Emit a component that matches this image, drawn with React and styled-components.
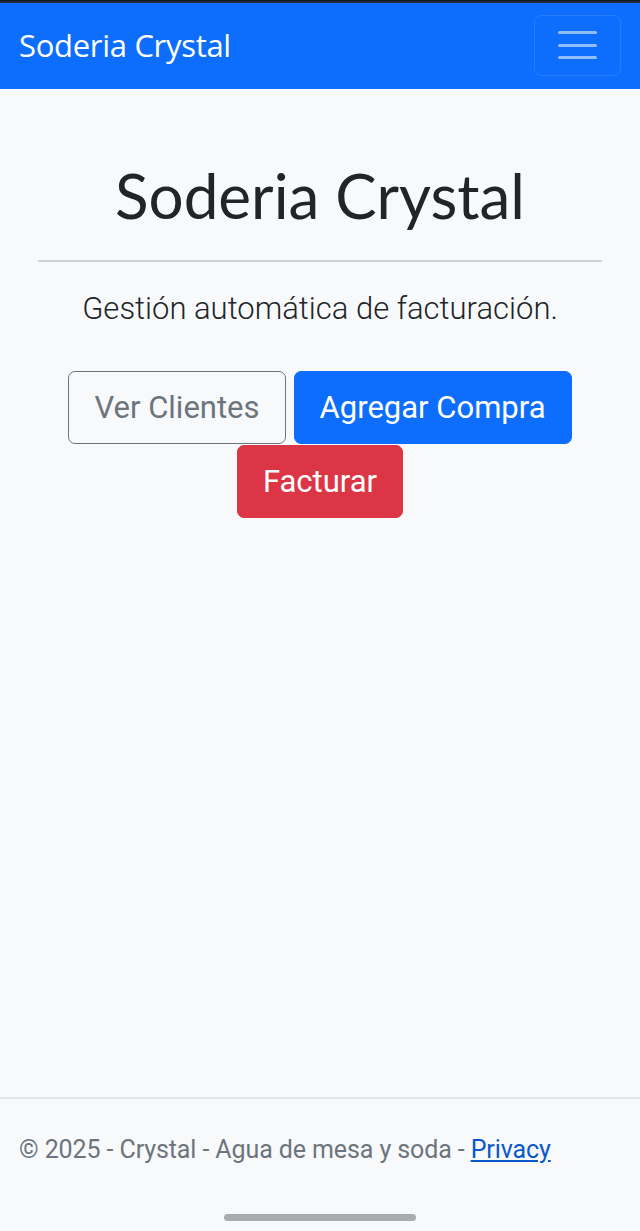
import React from 'react';
import styled, { createGlobalStyle } from 'styled-components';

const GlobalStyle = createGlobalStyle`
  * { box-sizing: border-box; }
  html, body { margin: 0; padding: 0; }
  body {
    background-color: #f8f9fa;
    font-family: Roboto, "Liberation Sans", sans-serif;
    color: #212529;
  }
`;

const Page = styled.div`
  min-height: 100vh;
  display: flex;
  flex-direction: column;
`;

const StatusStrip = styled.div`
  height: 3px;
  background: linear-gradient(#111318, #2a3550);
`;

const Navbar = styled.nav`
  height: 86px;
  background-color: #0d6efd;
  display: flex;
  align-items: center;
  justify-content: space-between;
  padding: 0 19px 0 19px;
`;

const Brand = styled.a`
  color: #fff;
  font-family: "Open Sans", "DejaVu Sans", sans-serif;
  font-size: 31px;
  margin-top: -3px;
  text-decoration: none;
  letter-spacing: -0.3px;
`;

const Toggler = styled.button`
  width: 87px;
  height: 61px;
  margin-top: -2px;
  border: 1px solid rgba(255, 255, 255, 0.1);
  border-radius: 7px;
  background: transparent;
  display: flex;
  flex-direction: column;
  align-items: center;
  justify-content: center;
  gap: 9.5px;
  padding: 0;
`;

const TogglerLine = styled.span`
  display: block;
  width: 39px;
  height: 3px;
  border-radius: 2px;
  background-color: rgba(255, 255, 255, 0.55);
`;

const Main = styled.main`
  flex: 1;
  padding: 0 38px;
  text-align: center;
`;

const Title = styled.h1`
  margin: 69px 0 0 0;
  font-family: Lato, "DejaVu Sans", sans-serif;
  font-weight: 400;
  font-size: 62px;
  line-height: 1.2;
  letter-spacing: 0px;
  color: #212529;
`;

const Divider = styled.hr`
  margin: 28px 0 0 0;
  border: 0;
  border-top: 2px solid #cfd0d2;
`;

const Lead = styled.p`
  margin: 24px 0 0 0;
  font-weight: 300;
  font-size: 31px;
  line-height: 46px;
  color: #212529;
`;

const ButtonRow = styled.div`
  margin-top: 39px;
  display: flex;
  flex-wrap: wrap;
  justify-content: center;
  column-gap: 8px;
  row-gap: 1px;
`;

const variants = {
  outline: { bg: 'transparent', border: '#6c757d', color: '#6c757d' },
  primary: { bg: '#0d6efd', border: '#0d6efd', color: '#fff' },
  danger: { bg: '#dc3545', border: '#dc3545', color: '#fff' },
};

const Button = styled.a`
  display: inline-block;
  padding: 14px 25px;
  font-family: Roboto, "Liberation Sans", sans-serif;
  font-size: 31px;
  line-height: 43px;
  border-radius: 7px;
  border: 1.5px solid ${({ $variant }) => variants[$variant].border};
  background-color: ${({ $variant }) => variants[$variant].bg};
  color: ${({ $variant }) => variants[$variant].color};
  text-decoration: none;
`;

const Footer = styled.footer`
  border-top: 2px solid #e3e5e8;
  padding: 0 19px;
`;

const FooterText = styled.p`
  margin: 33px 0 0 0;
  font-size: 25px;
  line-height: 36px;
  color: #6c757d;
  letter-spacing: -0.1px;
`;

const FooterLink = styled.a`
  color: #0a58ca;
  text-decoration: underline;
`;

const HomeBarRow = styled.div`
  display: flex;
  justify-content: center;
  padding: 46px 0 10px;
`;

const HomeBar = styled.div`
  width: 192px;
  height: 7px;
  border-radius: 4px;
  background-color: #a9aaad;
`;

export default function App() {
  return (
    <>
      <GlobalStyle />
      <Page>
        <StatusStrip />
        <Navbar>
          <Brand href="#">Soderia Crystal</Brand>
          <Toggler aria-label="Toggle navigation">
            <TogglerLine />
            <TogglerLine />
            <TogglerLine />
          </Toggler>
        </Navbar>
        <Main>
          <Title>Soderia Crystal</Title>
          <Divider />
          <Lead>Gestión automática de facturación.</Lead>
          <ButtonRow>
            <Button href="#" $variant="outline">Ver Clientes</Button>
            <Button href="#" $variant="primary">Agregar Compra</Button>
            <Button href="#" $variant="danger">Facturar</Button>
          </ButtonRow>
        </Main>
        <Footer>
          <FooterText>
            © 2025 - Crystal - Agua de mesa y soda - <FooterLink href="#">Privacy</FooterLink>
          </FooterText>
          <HomeBarRow>
            <HomeBar />
          </HomeBarRow>
        </Footer>
      </Page>
    </>
  );
}
